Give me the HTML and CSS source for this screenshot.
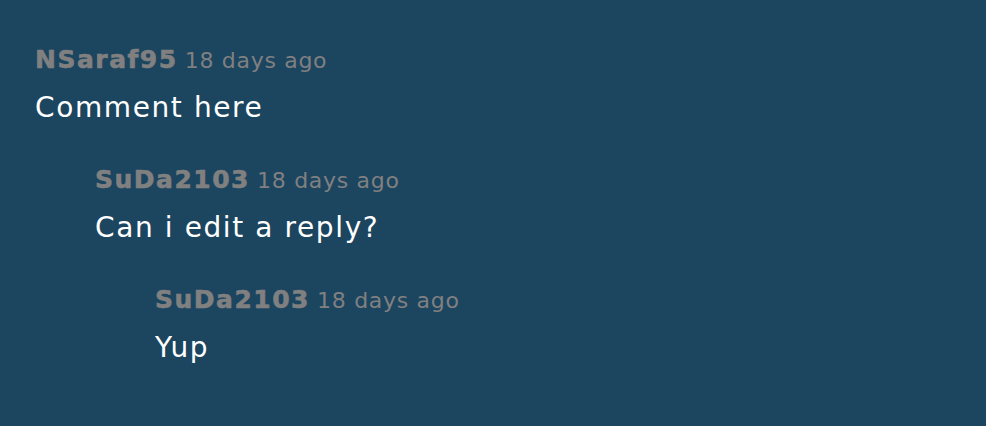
FILE: index.html
```html
<!DOCTYPE html>
<html>
<head>
<meta charset="utf-8">
<link rel="stylesheet" href="styles.css">
</head>
<body>
<div class="thread">
  <div class="comment">
    <div class="meta"><span class="user">NSaraf95</span> <span class="time">18 days ago</span></div>
    <div class="text">Comment here</div>
    <div class="replies">
      <div class="comment">
        <div class="meta"><span class="user">SuDa2103</span> <span class="time">18 days ago</span></div>
        <div class="text">Can i edit a reply?</div>
        <div class="replies">
          <div class="comment">
            <div class="meta"><span class="user">SuDa2103</span> <span class="time">18 days ago</span></div>
            <div class="text">Yup</div>
          </div>
        </div>
      </div>
    </div>
  </div>
</div>
</body>
</html>
```
FILE: styles.css
```css
html, body {
  margin: 0;
  padding: 0;
  background: #1c4560;
  height: 100%;
}
body {
  font-family: "DejaVu Sans", Inter, sans-serif;
  color: #ffffff;
}
.thread {
  padding: 40px 35px;
}
.meta {
  line-height: 40px;
  white-space: nowrap;
}
.user {
  font-size: 25px;
  font-weight: 700;
  color: #808080;
  letter-spacing: 1.5px;
  -webkit-text-stroke: 0.6px #808080;
}
.time {
  font-size: 22px;
  color: #808080;
  letter-spacing: 0.7px;
  margin-left: 2px;
}
.text {
  font-size: 28px;
  line-height: 49px;
  letter-spacing: 1.6px;
}
.replies {
  padding-left: 60px;
  padding-top: 28px;
}
```
